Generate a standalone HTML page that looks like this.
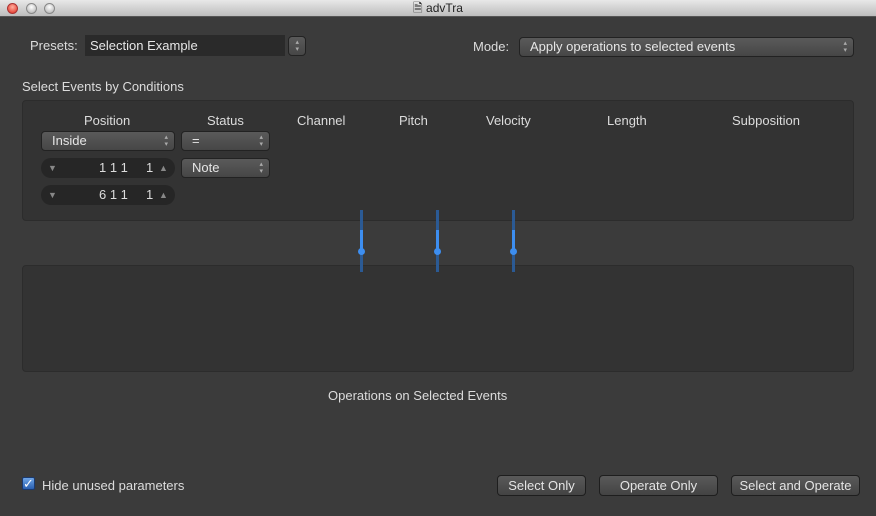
<!DOCTYPE html><html><head><style>
*{box-sizing:border-box;margin:0;padding:0}
body{width:876px;height:516px;background:#3b3b3b;font-family:"Liberation Sans",sans-serif;color:#dcdcdc;font-size:13px;position:relative;overflow:hidden}
.a{position:absolute}
.tb{left:0;top:0;width:876px;height:17px;background:linear-gradient(#e8e8e8,#bdbdbd);border-bottom:1px solid #555;color:#222;font-size:12px;text-align:center;line-height:17px}
.dot{top:3px;width:11px;height:11px;border-radius:50%;background:radial-gradient(circle at 50% 35%,#fff,#aaa);border:1px solid #888}
.panel{background:#333;border:1px solid #2c2c2c;border-radius:4px}
.pop{background:linear-gradient(#5a5a5a,#464646);border:1px solid #222;border-radius:4px;height:20px;line-height:18px;padding-left:10px;color:#e6e6e6}
.pop:after{content:"▴\A▾";white-space:pre;position:absolute;right:6px;top:2px;font-size:7px;line-height:7px;color:#aaa}
.num{background:#262626;border-radius:10px;height:20px;line-height:20px;color:#ddd;font-size:13px}
.btn{background:linear-gradient(#5a5a5a,#434343);border:1px solid #1e1e1e;border-radius:4px;height:21px;line-height:19px;text-align:center;color:#e4e4e4}
.sl{width:3px;background:#2b5a94;top:210px;height:62px}
.sl i{position:absolute;left:0;top:20px;width:3px;height:22px;background:#3d8ef0}
.sl b{position:absolute;left:-2px;top:38px;width:7px;height:7px;border-radius:50%;background:#3d8ef0}
</style></head><body>
<div class="a tb">🗎 advTra</div>
<div class="a dot" style="left:7px;background:radial-gradient(circle at 50% 35%,#ffb0a0,#e0281c);border-color:#a33"></div>
<div class="a dot" style="left:26px"></div>
<div class="a dot" style="left:44px"></div>
<div class="a" style="left:30px;top:38px">Presets:</div>
<div class="a" style="left:85px;top:35px;width:200px;height:21px;background:#2a2a2a;padding-left:5px;line-height:21px;color:#e6e6e6">Selection Example</div>
<div class="a pop" style="left:288px;top:36px;width:18px;padding:0"></div>
<div class="a" style="left:473px;top:39px">Mode:</div>
<div class="a pop" style="left:519px;top:37px;width:335px">Apply operations to selected events</div>
<div class="a" style="left:22px;top:79px">Select Events by Conditions</div>
<div class="a panel" style="left:22px;top:100px;width:832px;height:121px"></div>
<div class="a" style="left:84px;top:113px">Position</div>
<div class="a" style="left:207px;top:113px">Status</div>
<div class="a" style="left:297px;top:113px">Channel</div>
<div class="a" style="left:399px;top:113px">Pitch</div>
<div class="a" style="left:486px;top:113px">Velocity</div>
<div class="a" style="left:607px;top:113px">Length</div>
<div class="a" style="left:732px;top:113px">Subposition</div>
<div class="a pop" style="left:41px;top:131px;width:134px">Inside</div>
<div class="a pop" style="left:181px;top:131px;width:89px">=</div>
<div class="a pop" style="left:181px;top:158px;width:89px">Note</div>
<div class="a num" style="left:41px;top:158px;width:134px"><span class="a" style="left:7px;font-size:9px;color:#888">▼</span><span class="a" style="left:58px">1 1 1</span><span class="a" style="left:105px">1</span><span class="a" style="left:118px;font-size:9px;color:#888">▲</span></div>
<div class="a num" style="left:41px;top:185px;width:134px"><span class="a" style="left:7px;font-size:9px;color:#888">▼</span><span class="a" style="left:58px">6 1 1</span><span class="a" style="left:105px">1</span><span class="a" style="left:118px;font-size:9px;color:#888">▲</span></div>
<div class="a panel" style="left:22px;top:265px;width:832px;height:107px"></div>
<div class="a sl" style="left:360px"><i></i><b></b></div>
<div class="a sl" style="left:436px"><i></i><b></b></div>
<div class="a sl" style="left:512px"><i></i><b></b></div>
<div class="a" style="left:328px;top:388px">Operations on Selected Events</div>
<div class="a" style="left:22px;top:477px;width:13px;height:13px;background:linear-gradient(#6fa6e8,#2a5fb0);border:1px solid #1a3a70;border-radius:2px;color:#fff;font-size:13px;line-height:11px;text-align:center">✓</div>
<div class="a" style="left:42px;top:478px">Hide unused parameters</div>
<div class="a btn" style="left:497px;top:475px;width:89px">Select Only</div>
<div class="a btn" style="left:599px;top:475px;width:119px">Operate Only</div>
<div class="a btn" style="left:731px;top:475px;width:129px">Select and Operate</div>
</body></html>
